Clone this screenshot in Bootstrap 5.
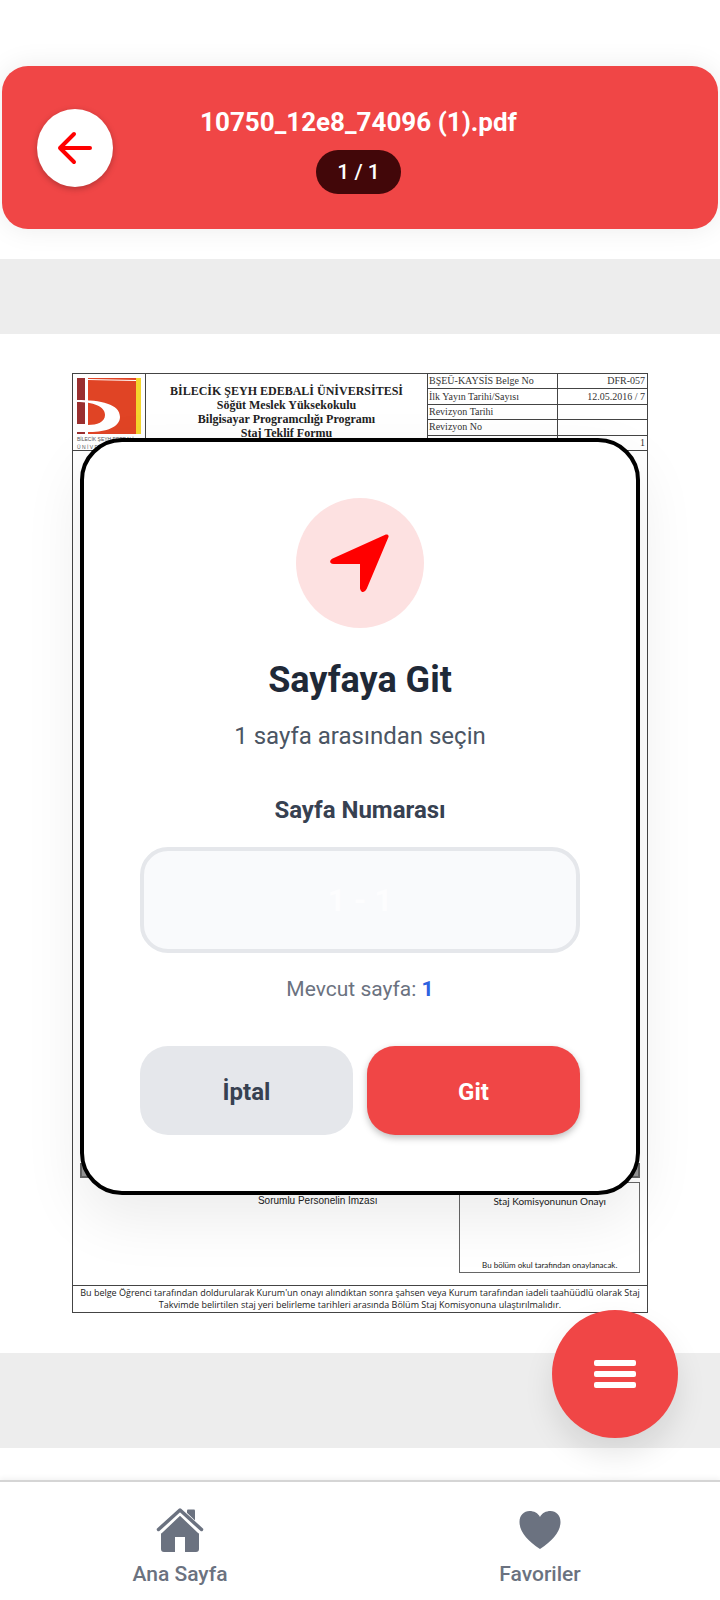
<!DOCTYPE html>
<html lang="tr">
<head>
<meta charset="utf-8">
<meta name="viewport" content="width=device-width, initial-scale=1">
<title>10750_12e8_74096 (1).pdf</title>
<link rel="stylesheet" href="https://cdn.jsdelivr.net/npm/bootstrap@5.3.0/dist/css/bootstrap.min.css">
<style>
:root { --brand: #f04646; --line: #444; }
body { font-family: Roboto, "Noto Sans", sans-serif; background: #fff; }
.screen { min-height: 100vh; padding-top: 66px; }
.app-header { margin: 0 2px 30px; height: 163px; border-radius: 26px; background: var(--brand); box-shadow: 0 0 28px rgba(0,0,0,.08); padding: 4px 38px 0 35px; }
.back-btn { width: 76px; height: 78px; margin-bottom: 4px; box-shadow: 0 2px 6px rgba(0,0,0,.25); }
.file-name { font-size: 26px; line-height: 32px; font-weight: 700; margin-bottom: 12px; }
.page-pill { font-size: 21px; line-height: 24px; font-weight: 500; padding: 10px 21px; background: #420709; border-radius: 22px; }
.side-space { width: 76px; }
.band-top { height: 75px; background: #ededed; }
.band-bottom { height: 95px; background: #ededed; margin-bottom: 32px; }
.sheet-area { padding: 39px 10% 40px; }
.sheet { border: 1px solid var(--line); color: #222; font-variant-ligatures: none; }
.sheet-head { height: 77px; border-bottom: 1px solid var(--line); font-family: "Liberation Serif", serif; }
.sheet-logo { width: 73px; border-right: 1px solid var(--line); padding: 3px 4px; }
.sheet-logo svg { display: block; }
.logo-text { font: 5px/8px "Liberation Sans", sans-serif; color: #555; white-space: nowrap; }
.sheet-title { font-size: 12px; line-height: 14px; font-weight: 700; padding-top: 10px; white-space: nowrap; }
.sheet-meta { width: 220px; font-size: 10px; line-height: 11px; border-collapse: collapse; color: #333; }
.sheet-meta td { border-bottom: 1px solid var(--line); border-left: 1px solid var(--line); padding: 1px 2px 2px 1px; white-space: nowrap; }
.sheet-meta tr:last-child td { border-bottom: 0; }
.sheet-meta td:last-child { width: 90px; text-align: right; }
.grey-row { height: 15px; margin: 0 7px 4px; background: #999; border: 2px solid #666; }
.sign-row { margin: 0 7px 12px; font: 10px/14px "Liberation Sans", sans-serif; height: 91px; }
.sign-name { width: 380px; padding-top: 12px; padding-left: 96px; }
.sign-box { width: 181px; border: 1px solid #666; padding: 11px 0 0; font: 10px/14px Lato, sans-serif; }
.sign-note { font-size: 8px; }
.sheet-foot { border-top: 1px solid var(--line); font: 9px/12px "Open Sans", sans-serif; padding: 1px 0; white-space: nowrap; }
.overlay { position: absolute; inset: 0; padding: 32px 80px 0; }
.goto-dialog { border: 4px solid #000; border-radius: 42px; background: #fff; padding: 56px; box-shadow: 0 24px 60px rgba(0,0,0,.08); }
.goto-icon { width: 128px; height: 130px; background: #fde1e1; margin-bottom: 30px; }
.goto-title { font-size: 36px; line-height: 44px; font-weight: 700; color: #1f2937; margin-bottom: 16px; }
.goto-sub { font-size: 24px; line-height: 36px; color: #4b5563; margin-bottom: 40px; }
.goto-label { font-size: 24px; line-height: 32px; font-weight: 700; color: #374151; margin-bottom: 21px; }
.goto-input { height: 106px; border: 4px solid #e5e7eb; border-radius: 28px; background: #f9fafc; font-size: 32px; font-weight: 700; text-align: center; }
.goto-input::placeholder { color: #fdfdfe; opacity: 1; }
.goto-current { font-size: 21px; line-height: 28px; color: #6b7280; margin: 22px 0 43px; }
.goto-current b { color: #2d62e0; }
.goto-actions { gap: 14px; }
.goto-btn { height: 89px; border: 0; border-radius: 28px; font-size: 24px; font-weight: 700; padding: 9px 12px 6px; }
.goto-cancel, .goto-cancel:hover { background: #e5e7eb; color: #374151; }
.goto-ok, .goto-ok:hover { background: var(--brand); color: #fff; box-shadow: 0 3px 7px rgba(0,0,0,.25); }
.fab { position: absolute; right: 42px; bottom: 162px; width: 126px; height: 128px; background: var(--brand); box-shadow: 0 16px 30px rgba(0,0,0,.1); }
.tabbar { height: 120px; border-top: 2px solid #d5d5d5; box-shadow: 0 -2px 5px rgba(0,0,0,.05); background: #fff; padding-top: 25px; }
.tabbar a { color: #6b7280; font-size: 21px; line-height: 28px; font-weight: 500; }
.tabbar svg { margin-bottom: 7px; }
</style>
</head>
<body>
<div class="screen position-relative d-flex flex-column">
  <header class="app-header d-flex align-items-center justify-content-between">
    <button type="button" class="back-btn btn btn-light bg-white border-0 rounded-circle p-0 d-flex align-items-center justify-content-center" aria-label="Geri">
      <svg width="36" height="34" viewBox="0 0 36 34" fill="none" stroke="#f00" stroke-width="4" stroke-linecap="round" stroke-linejoin="round"><path d="M17 3 3 17l14 14M3 17h30"/></svg>
    </button>
    <div class="text-center text-white text-nowrap d-flex flex-column align-items-center">
      <h1 class="file-name">10750_12e8_74096 (1).pdf</h1>
      <span class="page-pill">1 / 1</span>
    </div>
    <div class="side-space"></div>
  </header>

  <div class="band-top"></div>
  <main class="sheet-area flex-grow-1 d-flex flex-column">
    <article class="sheet flex-grow-1 d-flex flex-column">
      <div class="sheet-head d-flex overflow-hidden">
        <div class="sheet-logo">
          <svg width="66" height="58" viewBox="0 0 66 58">
            <path fill="#9a2f2f" d="M0 1h8v46H0zM0 55h8v2H0z"/>
            <path fill="#e04425" d="M11 1h48v56H11z"/>
            <path fill="#f4d52c" d="M59 1h5v56h-5z"/>
            <path fill="#fff" d="M11 2l48 1v1L11 3zM0 23c24 0 43 4 43 17 0 10-14 15-30 15H0v-7h11c9 0 17-3 17-10 0-9-12-13-28-13z"/>
          </svg>
          <div class="logo-text">BİLECİK ŞEYH EDEBALİ</div>
          <div class="logo-text">Ü N İ V E R S İ T E S İ</div>
        </div>
        <div class="sheet-title flex-grow-1 text-center">
          <div>BİLECİK ŞEYH EDEBALİ ÜNİVERSİTESİ</div>
          <div>Söğüt Meslek Yüksekokulu</div>
          <div>Bilgisayar Programcılığı Programı</div>
          <div>Staj Teklif Formu</div>
        </div>
        <table class="sheet-meta">
          <tr><td>BŞEÜ-KAYSİS Belge No</td><td>DFR-057</td></tr>
          <tr><td>İlk Yayın Tarihi/Sayısı</td><td>12.05.2016 / 7</td></tr>
          <tr><td>Revizyon Tarihi</td><td></td></tr>
          <tr><td>Revizyon No</td><td></td></tr>
          <tr><td></td><td>1</td></tr>
        </table>
      </div>
      <div class="flex-grow-1"></div>
      <div class="grey-row"></div>
      <div class="sign-row d-flex justify-content-between">
        <div class="sign-name text-center">Sorumlu Personelin İmzası</div>
        <div class="sign-box d-flex flex-column justify-content-between text-center">
          <span>Staj Komisyonunun Onayı</span>
          <span class="sign-note">Bu bölüm okul tarafından onaylanacak.</span>
        </div>
      </div>
      <div class="sheet-foot text-center">
        Bu belge Öğrenci tarafından doldurularak Kurum'un onayı alındıktan sonra şahsen veya Kurum tarafından iadeli taahüüdlü olarak Staj<br>
        Takvimde belirtilen staj yeri belirleme tarihleri arasında Bölüm Staj Komisyonuna ulaştırılmalıdır.
      </div>
    </article>
  </main>
  <div class="band-bottom"></div>

  <nav class="tabbar d-flex">
    <a href="#" class="flex-fill w-50 text-decoration-none d-flex flex-column align-items-center">
      <svg width="48" height="46" viewBox="0 0 48 46" fill="#6b7280"><path d="M31 3.500q0-1 1-1h6q1 0 1 1V18l-8-8z"/><path d="M5 22 24 5l19 17v20q0 3-3 3H29V30H19v15H8q-3 0-3-3z"/><path d="M3 24 24 4l21 20" fill="none" stroke="#fff" stroke-width="7"/><path d="M2.500 22.500 24 3l21.500 19.500" fill="none" stroke="#6b7280" stroke-width="3.500" stroke-linecap="round" stroke-linejoin="round"/></svg>
      Ana Sayfa
    </a>
    <a href="#" class="flex-fill w-50 text-decoration-none d-flex flex-column align-items-center">
      <svg width="48" height="46" viewBox="0 0 48 46" fill="#6b7280"><path d="M24 42C12 34 3.500 25 3.500 15 3.500 8 8 4 13.500 4 18 4 22 6 24 10c2-4 6-6 10.500-6C40 4 44.500 8 44.500 15c0 10-8.500 19-20.500 27z"/></svg>
      Favoriler
    </a>
  </nav>

  <div class="overlay d-flex align-items-center">
    <section class="goto-dialog w-100 d-flex flex-column align-items-center text-center" role="dialog" aria-labelledby="gotoTitle">
      <div class="goto-icon rounded-circle d-flex align-items-center justify-content-center">
        <svg width="60" height="60" viewBox="0 0 62 62" fill="#f00" stroke="#f00" stroke-width="4" stroke-linejoin="round"><path d="M58.500 3.500 3 28.500q-2 1.500 1 1.500h29V57q1 4 3 0z"/></svg>
      </div>
      <h2 class="goto-title" id="gotoTitle">Sayfaya Git</h2>
      <p class="goto-sub">1 sayfa arasından seçin</p>
      <label class="goto-label" for="pageNo">Sayfa Numarası</label>
      <input class="goto-input form-control" id="pageNo" type="text" inputmode="numeric" placeholder="1 - 1">
      <p class="goto-current">Mevcut sayfa: <b>1</b></p>
      <div class="goto-actions d-flex w-100">
        <button type="button" class="goto-btn goto-cancel btn flex-fill w-50">İptal</button>
        <button type="button" class="goto-btn goto-ok btn flex-fill w-50">Git</button>
      </div>
    </section>
  </div>

  <button type="button" class="fab btn border-0 rounded-circle p-0 d-flex align-items-center justify-content-center" aria-label="Menü">
    <svg width="42" height="28" viewBox="0 0 42 28" fill="#fff"><rect width="42" height="6" rx="2"/><rect y="11" width="42" height="6" rx="2"/><rect y="22" width="42" height="6" rx="2"/></svg>
  </button>
</div>
<script src="https://cdn.jsdelivr.net/npm/bootstrap@5.3.0/dist/js/bootstrap.bundle.min.js"></script>
</body>
</html>
